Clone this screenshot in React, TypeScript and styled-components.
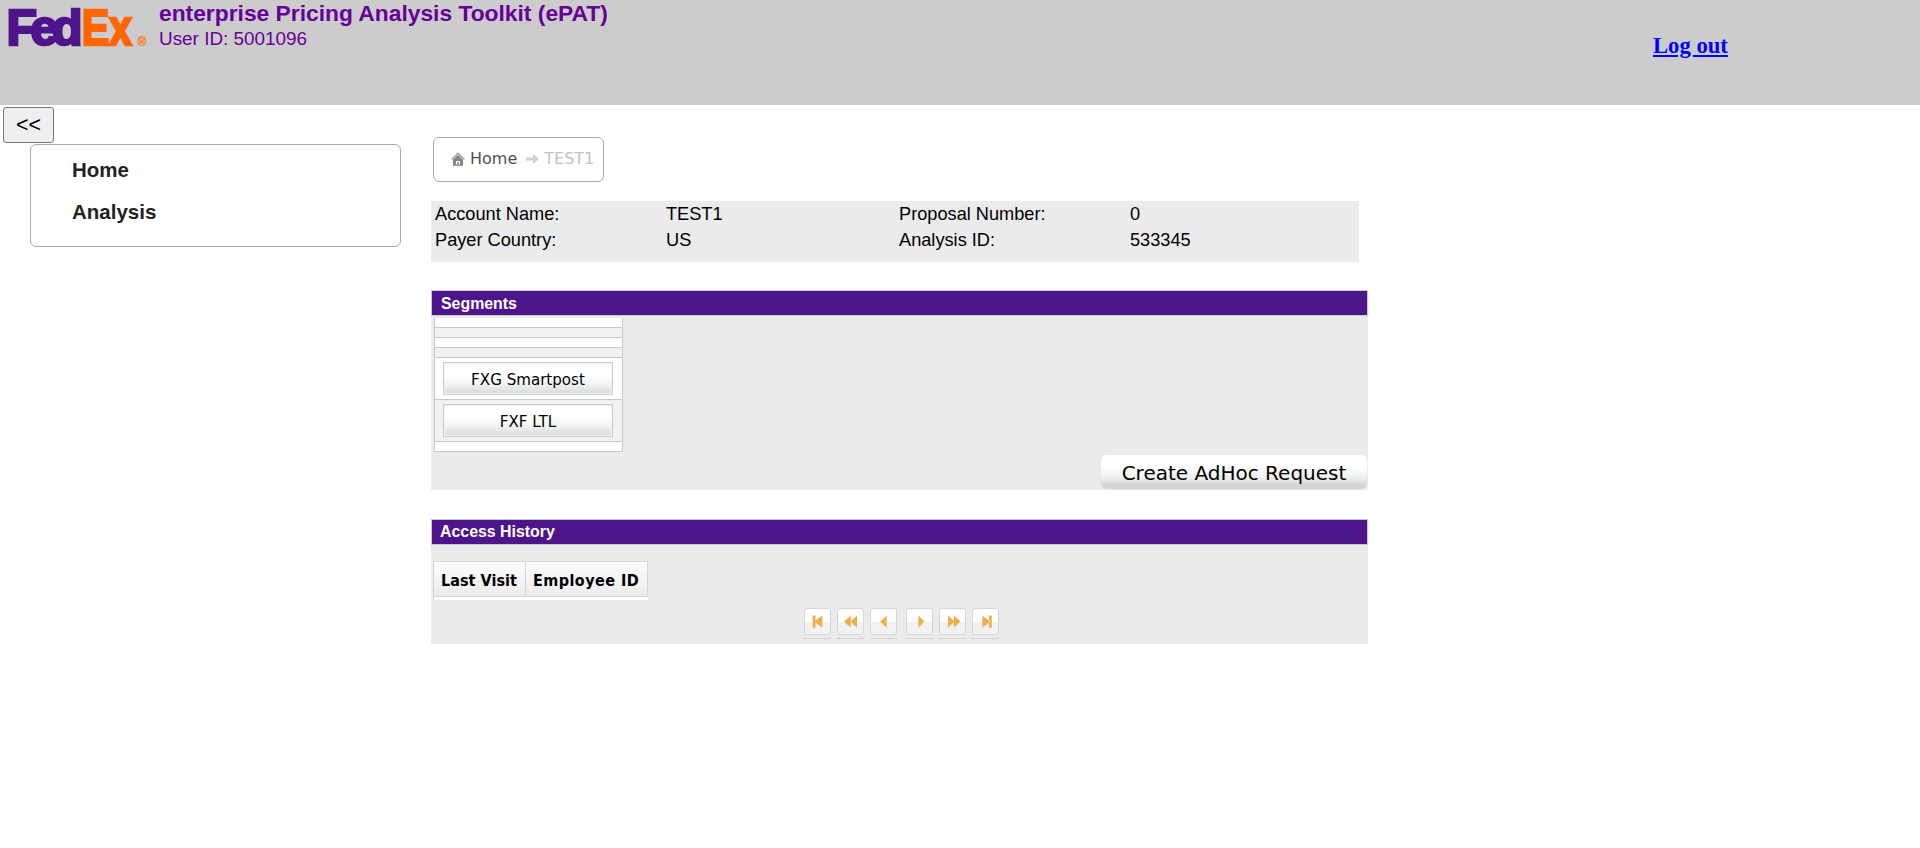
import React from "react";
import styled, { createGlobalStyle } from "styled-components";

const Global = createGlobalStyle`
  *, *::before, *::after { box-sizing: border-box; }
  body {
    margin: 0;
    background: #fff;
    color: #000;
    font-family: "Liberation Sans", Arial, sans-serif;
  }
  button { font: inherit; color: inherit; cursor: pointer; margin: 0; }
`;

const Header = styled.header`
  display: flex;
  height: 105px;
  background: #ccc;
`;

const Logo = styled.svg`
  flex: none;
  width: 159px;
  height: 60px;
`;

const TitleBlock = styled.div`
  flex: 1;
  color: #609;
  white-space: nowrap;
`;

const AppTitle = styled.h1`
  margin: 0;
  font-size: 22.8px;
  font-weight: bold;
  line-height: 26px;
`;

const UserId = styled.div`
  font-size: 18.9px;
  line-height: 25px;
`;

const Logout = styled.a`
  width: 267px;
  padding-top: 32px;
  font: bold 22.67px/28px "Liberation Serif", "Times New Roman", serif;
  color: #00f;
  text-decoration: underline;
`;

const Page = styled.div`
  display: flex;
  align-items: flex-start;
`;

const Sidebar = styled.aside`
  width: 431px;
  padding: 2px 0 0 3px;
`;

const Collapse = styled.button`
  display: block;
  width: 51px;
  height: 36px;
  padding: 0;
  border: 1px solid #767676;
  border-radius: 3px;
  background: #efefef;
  font-size: 21.5px;
  line-height: 32px;
`;

const Menu = styled.nav`
  width: 371px;
  height: 103px;
  margin: 1px 0 0 27px;
  padding: 4px 0 0 41px;
  border: 1px solid #aaa;
  border-radius: 6px;
`;

const MenuItem = styled.a`
  display: block;
  height: 42px;
  font-size: 20.5px;
  font-weight: bold;
  line-height: 42px;
  color: #222;
`;

const Main = styled.main`
  width: 937px;
  padding-top: 32px;
`;

const Breadcrumb = styled.nav`
  display: flex;
  align-items: center;
  width: 171px;
  height: 45px;
  margin-left: 2px;
  padding: 0 0 1px 17px;
  border: 1px solid #a8a8a8;
  border-radius: 6px;
  font: 16px/20px "DejaVu Sans", Verdana, sans-serif;
  color: #4f4f4f;
  white-space: nowrap;
`;

const ArrowIcon = styled.svg`
  margin-left: 9px;
`;

const Crumb = styled.span<{ $muted?: boolean }>`
  margin-left: 5px;
  padding-bottom: 1px;
  color: ${(p) => (p.$muted ? "#c2c2c2" : "#4f4f4f")};
`;

const Info = styled.dl`
  display: grid;
  grid-template-columns: 231px 233px 231px 1fr;
  grid-auto-rows: 26px;
  width: 928px;
  height: 61px;
  margin: 19px 0 28px;
  background: #ebebeb;
  font-size: 18.2px;
  line-height: 26px;
`;

const InfoCell = styled.div`
  padding-left: 4px;
`;

const Panel = styled.section<{ $height: number }>`
  display: flex;
  flex-direction: column;
  height: ${(p) => p.$height}px;
  margin-bottom: 29px;
  background: #ebebeb;
`;

const PanelTitle = styled.h2<{ $inset: number; $line: number }>`
  height: 26px;
  margin: 0;
  padding-left: ${(p) => p.$inset}px;
  border: 1px solid #c9c9c9;
  background: #4d148c;
  color: #fff;
  font-size: 15.9px;
  font-weight: bold;
  line-height: ${(p) => p.$line}px;
`;

const SegmentList = styled.div`
  width: 189px;
  margin: 2px 0 0 3px;
  border: solid #c9c9c9;
  border-width: 0 1px;
`;

const SegmentRow = styled.div<{ $alt?: boolean; $height: number }>`
  height: ${(p) => p.$height}px;
  padding: 4px 9px 0 8px;
  border-bottom: 1px solid #c9c9c9;
  background: ${(p) => (p.$alt ? "#f1f1f1" : "#fff")};
`;

const SegmentButton = styled.button`
  display: block;
  width: 100%;
  height: 33px;
  padding: 3px 0 0;
  border: 1px solid #ccc;
  box-shadow: inset 0 0 0 1px #f4f4f4;
  background: linear-gradient(#fff 40%, #f4f5f5 65%, #d7dada);
  font: 15.1px/28px "DejaVu Sans", Verdana, sans-serif;
`;

const AdHocButton = styled.button`
  align-self: flex-end;
  width: 266px;
  height: 34px;
  margin: 3px 1px 0 0;
  padding: 0;
  border: 0;
  border-radius: 6px;
  background: linear-gradient(#fff 35%, #eff0f0 65%, #d3d3d4 90%);
  font: 20px/36px "DejaVu Sans", Verdana, sans-serif;
`;

const HistoryTable = styled.div`
  align-self: flex-start;
  margin: 16px 0 0 2px;
  padding-bottom: 3px;
  border-left: 1px solid #d5d5d5;
  background: #fff;
`;

const HistoryHead = styled.div`
  display: flex;
  height: 36px;
  border: solid #d5d5d5;
  border-width: 1px 0;
  background: linear-gradient(#fdfdfd, #ececec);
`;

const HistoryCell = styled.div<{ $width: number; $track: number }>`
  width: ${(p) => p.$width}px;
  padding-left: 7px;
  border-right: 1px solid #d5d5d5;
  font: bold 16px/37px "DejaVu Sans Condensed", Tahoma, "DejaVu Sans", sans-serif;
  letter-spacing: ${(p) => p.$track}px;
  white-space: nowrap;
`;

const Pager = styled.div`
  display: flex;
  gap: 9px;
  margin: 8px 0 0 373px;
`;

const PagerGroup = styled.div`
  display: flex;
  gap: 6px;
`;

const PagerSlot = styled.div`
  width: 27px;
  height: 31px;
  border-bottom: 1px dotted #bbb;
`;

const PagerButton = styled.button`
  display: flex;
  width: 27px;
  height: 27px;
  padding: 0;
  border: 1px solid #d6d6d6;
  border-radius: 3px;
  background: linear-gradient(#fff 50%, #f2f2f2 50%);
`;

const icons: Record<string, string> = {
  First: "M8.700 7.500h2.800v12.300H8.700z M18.300 7.500v12.300L10 13.600z",
  Fast: "M13.700 7.500v12.300L7 13.600z M20 7.500v12.300l-6.500-6.200z",
  Previous: "M16.700 7.500v12.300L10 13.600z",
  Next: "M12.300 7.500v12.300l6.200-6.200z",
  Forward: "M9 7.500v12.300l6.500-6.200z M15 7.500v12.300l6.500-6.200z",
  Last: "M10.300 7.500v12.300l8-6.200z M17 7.500h2.800v12.300H17z",
};

const PageControl = ({ name }: { name: string }) => (
  <PagerSlot>
    <PagerButton aria-label={name}>
      <svg width="25" height="25" viewBox="1 1 25 25">
        <path d={icons[name]} fill="#efb04a" />
      </svg>
    </PagerButton>
  </PagerSlot>
);

const details = [
  "Account Name:", "TEST1", "Proposal Number:", "0",
  "Payer Country:", "US", "Analysis ID:", "533345",
];

export default function App() {
  return (
    <>
      <Global />
      <Header>
        <Logo viewBox="0 0 159 60" fontFamily="Liberation Sans, Arial, sans-serif" fontWeight="bold" fontSize="50" strokeWidth="2.6">
          <text x="6.500" y="45" textLength="76" lengthAdjust="spacing" fill="#4d148c" stroke="#4d148c">Fed</text>
          <text x="82" y="45" textLength="50" lengthAdjust="spacingAndGlyphs" fill="#f60" stroke="#f60">Ex</text>
          <text x="137.500" y="46" fontSize="12" fontWeight="normal" strokeWidth="0.4" stroke="#ff7a20" fill="#ff7a20">®</text>
        </Logo>
        <TitleBlock>
          <AppTitle>enterprise Pricing Analysis Toolkit (ePAT)</AppTitle>
          <UserId>User ID: 5001096</UserId>
        </TitleBlock>
        <Logout>Log out</Logout>
      </Header>
      <Page>
        <Sidebar>
          <Collapse>&lt;&lt;</Collapse>
          <Menu>
            <MenuItem>Home</MenuItem>
            <MenuItem>Analysis</MenuItem>
          </Menu>
        </Sidebar>
        <Main>
          <Breadcrumb>
            <svg width="14" height="14" viewBox="0 0 14 14">
              <path d="M0 7L7 0l7 7-1 1L7 2.500 1 8z" fill="#aaa" />
              <path d="M2 7.500L7 3l5 4.500V14H9V9H5v5H2z" fill="#858585" />
              <path d="M2 12.500h10V14H2z M6 10h2v4H6z" fill="#999" />
            </svg>
            <Crumb>Home</Crumb>
            <ArrowIcon width="13" height="10" viewBox="0 0 13 10">
              <path d="M0 3.500h7V0l6 5-6 5V6.500H0z" fill="#d0d0d0" />
            </ArrowIcon>
            <Crumb $muted>TEST1</Crumb>
          </Breadcrumb>
          <Info>
            {details.map((text) => <InfoCell key={text}>{text}</InfoCell>)}
          </Info>
          <Panel $height={200}>
            <PanelTitle $inset={9} $line={25}>Segments</PanelTitle>
            <SegmentList>
              <SegmentRow $height={10} />
              <SegmentRow $height={10} $alt />
              <SegmentRow $height={10} />
              <SegmentRow $height={10} $alt />
              <SegmentRow $height={42}><SegmentButton>FXG Smartpost</SegmentButton></SegmentRow>
              <SegmentRow $height={42} $alt><SegmentButton>FXF LTL</SegmentButton></SegmentRow>
              <SegmentRow $height={10} />
            </SegmentList>
            <AdHocButton>Create AdHoc Request</AdHocButton>
          </Panel>
          <Panel $height={125}>
            <PanelTitle $inset={8} $line={24}>Access History</PanelTitle>
            <HistoryTable>
              <HistoryHead>
                <HistoryCell $width={92} $track={0.05}>Last Visit</HistoryCell>
                <HistoryCell $width={122} $track={0.45}>Employee ID</HistoryCell>
              </HistoryHead>
            </HistoryTable>
            <Pager>
              <PagerGroup>
                <PageControl name="First" />
                <PageControl name="Fast" />
                <PageControl name="Previous" />
              </PagerGroup>
              <PagerGroup>
                <PageControl name="Next" />
                <PageControl name="Forward" />
                <PageControl name="Last" />
              </PagerGroup>
            </Pager>
          </Panel>
        </Main>
      </Page>
    </>
  );
}
